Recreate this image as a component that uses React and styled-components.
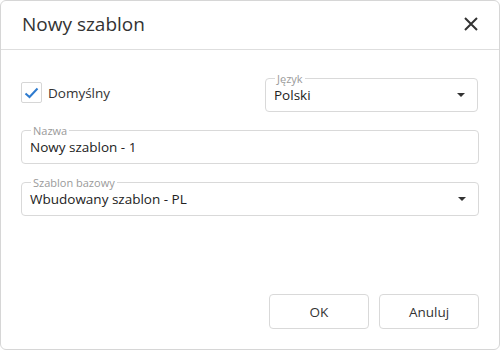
import React from "react";
import styled, { createGlobalStyle } from "styled-components";

const GlobalStyle = createGlobalStyle`
  html, body {
    margin: 0;
    padding: 0;
    background: #ffffff;
  }
  * {
    box-sizing: border-box;
  }
`;

const Dialog = styled.div`
  width: 500px;
  height: 350px;
  display: flex;
  flex-direction: column;
  background: #fff;
  border: 1px solid #d6d6d6;
  border-radius: 6px;
  font-family: "Open Sans", "Noto Sans", sans-serif;
  color: #333;
`;

const Header = styled.div`
  height: 49px;
  display: flex;
  align-items: center;
  justify-content: space-between;
  padding: 0 20px 2px 21px;
  border-bottom: 1px solid #dedede;
`;

const Title = styled.h1`
  margin: 0;
  font-size: 19px;
  font-weight: 400;
  color: #333;
`;

const CloseButton = styled.button`
  width: 16px;
  height: 16px;
  padding: 0;
  border: none;
  background: none;
  display: flex;
  align-items: center;
  justify-content: center;
  cursor: pointer;
`;

const Body = styled.div`
  flex: 1;
  display: flex;
  flex-direction: column;
  gap: 13px;
  padding: 23px 20px 0;
`;

const Row = styled.div`
  display: grid;
  grid-template-columns: 234px 213px;
  column-gap: 10px;
  align-items: center;
`;

const CheckLabel = styled.label`
  display: flex;
  align-items: center;
  gap: 6px;
  font-size: 13.5px;
  color: #333;
`;

const CheckBox = styled.span`
  width: 21px;
  height: 21px;
  border: 1px solid #d6d6d6;
  border-radius: 2px;
  display: flex;
  align-items: center;
  justify-content: center;
`;

const Field = styled.fieldset`
  margin: 0;
  padding: 0 10px 5px 8px;
  border: 1px solid #d9d9d9;
  border-radius: 4px;
  min-width: 0;
`;

const Legend = styled.legend`
  padding: 0 2px;
  margin-left: 1px;
  font-size: 11px;
  line-height: 11px;
  color: #9a9a9a;
`;

const Value = styled.div`
  height: 22px;
  display: flex;
  align-items: center;
  justify-content: space-between;
  font-size: 13.5px;
  color: #222;
`;

const Arrow = styled.span`
  width: 0;
  height: 0;
  border-left: 4px solid transparent;
  border-right: 4px solid transparent;
  border-top: 4px solid #333;
  margin-right: 2px;
`;

const Footer = styled.div`
  margin-top: auto;
  display: flex;
  justify-content: flex-end;
  gap: 10px;
  padding: 0 20px 20px;
`;

const Button = styled.button`
  width: 100px;
  height: 35px;
  background: #fff;
  border: 1px solid #d9d9d9;
  border-radius: 4px;
  font-family: inherit;
  font-size: 13.5px;
  color: #333;
  cursor: pointer;
`;

function SelectField({ label, value }) {
  return (
    <Field>
      <Legend>{label}</Legend>
      <Value>
        <span>{value}</span>
        <Arrow />
      </Value>
    </Field>
  );
}

export default function App() {
  return (
    <>
      <GlobalStyle />
      <Dialog>
        <Header>
          <Title>Nowy szablon</Title>
          <CloseButton aria-label="Zamknij">
            <svg width="14" height="14" viewBox="0 0 14 14">
              <path d="M1 1L13 13M13 1L1 13" stroke="#333" strokeWidth="2" />
            </svg>
          </CloseButton>
        </Header>
        <Body>
          <Row>
            <CheckLabel>
              <CheckBox>
                <svg width="15" height="12" viewBox="0 0 15 12">
                  <path d="M1.5 6.5L5.5 10L13.5 1.5" fill="none" stroke="#2e7bcf" strokeWidth="2" />
                </svg>
              </CheckBox>
              Domyślny
            </CheckLabel>
            <SelectField label="Język" value="Polski" />
          </Row>
          <Field>
            <Legend>Nazwa</Legend>
            <Value>Nowy szablon - 1</Value>
          </Field>
          <SelectField label="Szablon bazowy" value="Wbudowany szablon - PL" />
        </Body>
        <Footer>
          <Button>OK</Button>
          <Button>Anuluj</Button>
        </Footer>
      </Dialog>
    </>
  );
}
